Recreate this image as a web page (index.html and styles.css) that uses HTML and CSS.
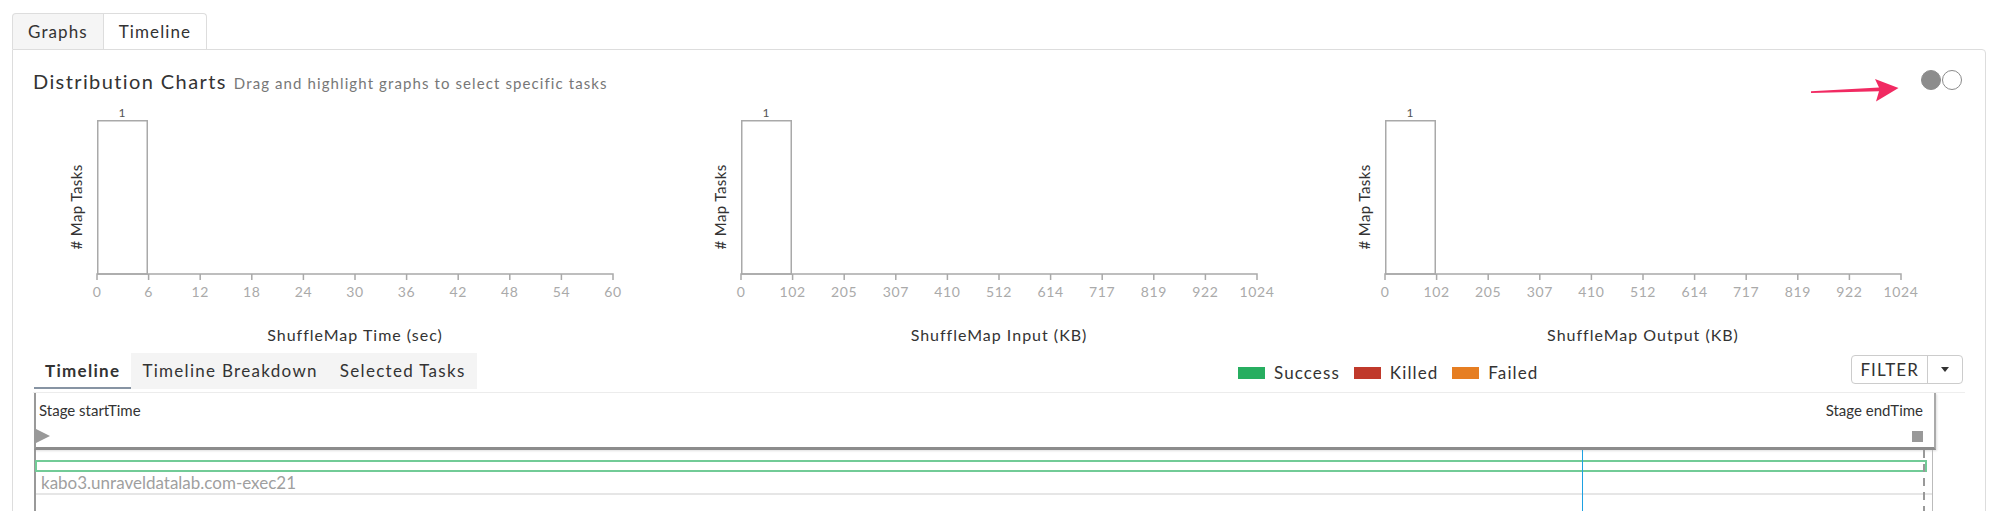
FILE: index.html
```html
<!DOCTYPE html>
<html>
<head>
<meta charset="utf-8">
<title>Distribution Charts</title>
<link rel="stylesheet" href="styles.css">
</head>
<body>
<div class="page">
  <div class="tabs">
    <div class="tab">Graphs</div>
    <div class="tab active">Timeline</div>
  </div>
  <div class="panel">
    <div class="head">
      <h2 class="title">Distribution Charts<span class="sub">Drag and highlight graphs to select specific tasks</span></h2>
      <div class="toggle"><span class="dot on"></span><span class="dot"></span></div>
      <svg class="arrow" width="92" height="26" viewBox="0 0 92 26">
        <path d="M2,14.3 L70,10.4 L66,2 L89.5,11 L67,24.5 L70,14.2 L2,16 Z"/>
      </svg>
    </div>

    <div class="charts">
      <svg class="chart" width="644" height="250" viewBox="0 0 644 250">
        <text class="count" x="89" y="17" text-anchor="middle">1</text>
        <rect class="bar" x="64.75" y="20.75" width="49.5" height="153.25"/>
        <path class="axis" d="M64,180V174H580V180M115.6,174v6M167.2,174v6M218.8,174v6M270.4,174v6M322,174v6M373.6,174v6M425.2,174v6M476.8,174v6M528.4,174v6"/>
        <g class="ticks" text-anchor="middle">
          <text x="64" y="197">0</text><text x="115.6" y="197">6</text><text x="167.2" y="197">12</text><text x="218.8" y="197">18</text><text x="270.4" y="197">24</text><text x="322" y="197">30</text><text x="373.6" y="197">36</text><text x="425.2" y="197">42</text><text x="476.8" y="197">48</text><text x="528.4" y="197">54</text><text x="580" y="197">60</text>
        </g>
        <text class="ylabel" transform="translate(49,107) rotate(-90)" text-anchor="middle"># Map Tasks</text>
        <text class="xlabel" x="322" y="241" text-anchor="middle">ShuffleMap Time (sec)</text>
      </svg>
      <svg class="chart" width="644" height="250" viewBox="0 0 644 250">
        <text class="count" x="89" y="17" text-anchor="middle">1</text>
        <rect class="bar" x="64.75" y="20.75" width="49.5" height="153.25"/>
        <path class="axis" d="M64,180V174H580V180M115.6,174v6M167.2,174v6M218.8,174v6M270.4,174v6M322,174v6M373.6,174v6M425.2,174v6M476.8,174v6M528.4,174v6"/>
        <g class="ticks" text-anchor="middle">
          <text x="64" y="197">0</text><text x="115.6" y="197">102</text><text x="167.2" y="197">205</text><text x="218.8" y="197">307</text><text x="270.4" y="197">410</text><text x="322" y="197">512</text><text x="373.6" y="197">614</text><text x="425.2" y="197">717</text><text x="476.8" y="197">819</text><text x="528.4" y="197">922</text><text x="580" y="197">1024</text>
        </g>
        <text class="ylabel" transform="translate(49,107) rotate(-90)" text-anchor="middle"># Map Tasks</text>
        <text class="xlabel" x="322" y="241" text-anchor="middle">ShuffleMap Input (KB)</text>
      </svg>
      <svg class="chart" width="644" height="250" viewBox="0 0 644 250">
        <text class="count" x="89" y="17" text-anchor="middle">1</text>
        <rect class="bar" x="64.75" y="20.75" width="49.5" height="153.25"/>
        <path class="axis" d="M64,180V174H580V180M115.6,174v6M167.2,174v6M218.8,174v6M270.4,174v6M322,174v6M373.6,174v6M425.2,174v6M476.8,174v6M528.4,174v6"/>
        <g class="ticks" text-anchor="middle">
          <text x="64" y="197">0</text><text x="115.6" y="197">102</text><text x="167.2" y="197">205</text><text x="218.8" y="197">307</text><text x="270.4" y="197">410</text><text x="322" y="197">512</text><text x="373.6" y="197">614</text><text x="425.2" y="197">717</text><text x="476.8" y="197">819</text><text x="528.4" y="197">922</text><text x="580" y="197">1024</text>
        </g>
        <text class="ylabel" transform="translate(49,107) rotate(-90)" text-anchor="middle"># Map Tasks</text>
        <text class="xlabel" x="322" y="241" text-anchor="middle">ShuffleMap Output (KB)</text>
      </svg>
    </div>

    <div class="tl-bar">
      <div class="subtabs">
        <div class="subtab active">Timeline</div>
        <div class="subtab">Timeline Breakdown</div>
        <div class="subtab">Selected Tasks</div>
      </div>
      <div class="legend">
        <div class="legend-item"><span class="swatch success"></span>Success</div>
        <div class="legend-item"><span class="swatch killed"></span>Killed</div>
        <div class="legend-item"><span class="swatch failed"></span>Failed</div>
      </div>
      <div class="filter">
        <span class="filter-label">FILTER</span>
        <span class="filter-caret"><span class="caret"></span></span>
      </div>
    </div>

    <div class="timeline">
      <div class="tl-head">
        <div class="tl-col">
          <span class="tl-label start">Stage startTime</span>
          <span class="start-mark"></span>
        </div>
        <div class="tl-col right">
          <span class="tl-label">Stage endTime</span>
          <span class="end-mark"></span>
        </div>
      </div>
      <div class="tl-body">
        <div class="task-bar"></div>
        <div class="task-label">kabo3.unraveldatalab.com-exec21</div>
        <div class="row-sep"></div>
        <div class="cursor"></div>
        <div class="end-line"></div>
      </div>
    </div>
  </div>
</div>
</body>
</html>
```

FILE: styles.css
```css
html, body {
  margin: 0;
  padding: 0;
  background: #fff;
  overflow: hidden;
}

body {
  font-family: Lato, "Open Sans", sans-serif;
  color: #333;
}

.page {
  padding: 13px 0 0 12px;
  width: 1974px;
}

/* top tabs */
.tabs {
  display: flex;
}

.tab {
  box-sizing: border-box;
  height: 36px;
  padding: 0 15px;
  border: 1px solid #ddd;
  border-bottom: 0;
  background: #f5f5f5;
  font-size: 17px;
  letter-spacing: 1.1px;
  line-height: 35px;
  color: #333;
}

.tab:first-child {
  border-top-left-radius: 4px;
}

.tab + .tab {
  border-left: 0;
  border-top-right-radius: 4px;
}

.tab.active {
  background: #fff;
}

/* panel */
.panel {
  box-sizing: border-box;
  width: 1974px;
  border: 1px solid #ddd;
  border-top-right-radius: 4px;
  padding: 0 20px;
  height: 480px;
}

.head {
  position: relative;
  display: flex;
  align-items: center;
  justify-content: space-between;
  height: 30px;
  margin-top: 17px;
}

.title {
  margin: 0;
  font-size: 20px;
  font-weight: normal;
  letter-spacing: 1.4px;
  line-height: 30px;
  color: #333;
}

.sub {
  margin-left: 7px;
  font-size: 15px;
  letter-spacing: 1.1px;
  color: #777;
}

.toggle {
  display: flex;
  gap: 1px;
  margin-right: 3px;
  margin-bottom: 4px;
}

.dot {
  box-sizing: border-box;
  width: 20px;
  height: 20px;
  border-radius: 50%;
  border: 1.5px solid #8a8a8a;
  background: #fff;
}

.dot.on {
  background: #8c8c8c;
  border-color: #8c8c8c;
}

.arrow {
  position: absolute;
  right: 64px;
  top: 10px;
}

.arrow path {
  fill: #f12a62;
}

/* charts */
.charts {
  display: grid;
  grid-template-columns: repeat(3, 644px);
  margin-top: 3px;
}

.chart {
  display: block;
  font-family: Lato, "Open Sans", sans-serif;
}

.chart .bar {
  fill: #fff;
  stroke: #a9a9a9;
  stroke-width: 1.5;
}

.chart .axis {
  fill: none;
  stroke: #a9a9a9;
  stroke-width: 1.5;
}

.chart .ticks text {
  fill: #aaa;
  font-size: 14px;
  letter-spacing: 0.6px;
}

.chart .count {
  fill: #555;
  font-size: 12px;
}

.chart .ylabel {
  fill: #333;
  font-size: 15px;
  letter-spacing: 0.4px;
}

.chart .xlabel {
  fill: #333;
  font-size: 16px;
  letter-spacing: 1px;
}

/* timeline toolbar */
.tl-bar {
  box-sizing: border-box;
  display: flex;
  height: 40px;
  margin-top: 3px;
  border-bottom: 1px solid #eee;
}

.subtabs {
  display: flex;
  margin-left: 1px;
  align-self: flex-start;
}

.subtab {
  box-sizing: border-box;
  height: 36px;
  padding: 0 11px;
  background: #f4f4f4;
  font-size: 17px;
  letter-spacing: 1.3px;
  line-height: 36px;
  color: #333;
}

.subtab.active {
  background: #fff;
  font-weight: bold;
  border-bottom: 2px solid #8794a3;
}

.legend {
  display: flex;
  align-items: center;
  gap: 14px;
  margin-left: auto;
  font-size: 17px;
  letter-spacing: 1.1px;
  color: #333;
}

.legend-item {
  display: flex;
  align-items: center;
}

.swatch {
  width: 27px;
  height: 12px;
  margin-right: 9px;
}

.swatch.success { background: #27ae60; }
.swatch.killed { background: #c0392b; }
.swatch.failed { background: #e67e22; }

.filter {
  box-sizing: border-box;
  display: flex;
  align-self: flex-start;
  height: 29px;
  margin: 2px 2px 0 313px;
  border: 1px solid #ccc;
  border-radius: 4px;
}

.filter-label {
  padding: 0 8px;
  font-size: 17px;
  letter-spacing: 1.1px;
  line-height: 27px;
  color: #333;
}

.filter-caret {
  display: flex;
  align-items: center;
  justify-content: center;
  width: 34px;
  border-left: 1px solid #ccc;
}

.caret {
  width: 0;
  height: 0;
  border-top: 5px solid #333;
  border-left: 4.5px solid transparent;
  border-right: 4.5px solid transparent;
}

/* timeline */
.timeline {
  margin-left: 1px;
  width: 1902px;
}

.tl-head {
  box-sizing: border-box;
  display: flex;
  justify-content: space-between;
  height: 57px;
  padding: 8px 11px 4px 0;
  border-left: 2px solid #999;
  border-right: 2px solid #aaa;
  border-bottom: 3px solid #8c8c8c;
  box-shadow: 1px 1px 2px rgba(0, 0, 0, 0.12);
}

.tl-col {
  display: flex;
  flex-direction: column;
  justify-content: space-between;
  align-items: flex-start;
}

.tl-col.right {
  align-items: flex-end;
}

.tl-label {
  font-size: 15px;
  line-height: 18px;
  color: #333;
}

.tl-label.start {
  margin-left: 3px;
}

.start-mark {
  width: 0;
  height: 0;
  border-left: 14px solid #999;
  border-top: 7.5px solid transparent;
  border-bottom: 7.5px solid transparent;
}

.end-mark {
  width: 11px;
  height: 11px;
  margin-bottom: 1px;
  background: #999;
}

.tl-body {
  position: relative;
  box-sizing: border-box;
  width: 1899px;
  height: 61px;
  padding-top: 10px;
  border-left: 2px solid #999;
  border-right: 1px solid #bbb;
}

.task-bar {
  box-sizing: border-box;
  height: 12px;
  margin-right: 5px;
  margin-left: -1px;
  border: 2px solid #72cb97;
  background: #fff;
}

.task-label {
  padding-left: 5px;
  font-size: 17px;
  line-height: 21px;
  color: #9f9f9f;
}

.row-sep {
  height: 2px;
  background: #e6e6e6;
}

.cursor {
  position: absolute;
  top: 0;
  bottom: 0;
  left: 1546px;
  width: 1px;
  background: #1da1e2;
}

.end-line {
  position: absolute;
  top: 0;
  bottom: 0;
  left: 1887px;
  width: 1.5px;
  background: repeating-linear-gradient(to bottom, #999 0 8px, transparent 8px 14px);
}
```
